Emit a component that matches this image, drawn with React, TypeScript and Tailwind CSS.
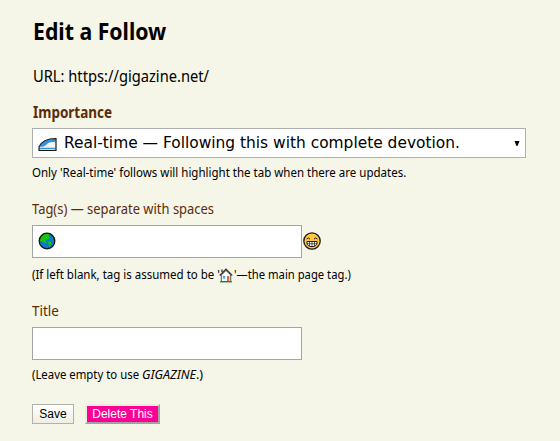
import React from "react";

function TrainIcon() {
  return (
    <svg viewBox="0 0 19 15" className="mt-[3px] h-[15px] w-[19px] shrink-0">
      <path d="M1 10C3 5 8 1.500 18 1.500V13.500H1Z" fill="#f3f7f3" />
      <path d="M1.500 9.500C4 4.500 9 2 17.500 2V5C12 4.500 10 5.500 8 8C6.500 9.800 4 10 1.500 9.500Z" fill="#2f91e0" />
      <path d="M1 11.500H17.500" stroke="#3b8ed0" strokeWidth="1.500" />
      <path d="M1 13.500V10C3 5 8 1.500 18 1.500V13.500Z" fill="none" stroke="#161616" strokeWidth="1.200" />
    </svg>
  );
}

function GlobeIcon() {
  return (
    <svg viewBox="0 0 18 18" className="-mt-[2px] size-[18px]">
      <circle cx="9" cy="9" r="7.800" fill="#0878d4" />
      <path d="M1.500 9C1.500 4 5 1.400 9.500 1.500L12 2.500L10.500 4L12 5L10.500 7L9 7L7.500 9.500L9 10.500L7 11L4 9.300Z M9.500 9.500L13 10L13.500 12L11.500 15.500L10.500 12Z M13.500 5L15 6L13.700 7Z" fill="#16c60c" />
      <circle cx="9" cy="9" r="7.800" fill="none" stroke="#111" strokeWidth="1.300" />
    </svg>
  );
}

function GrinIcon() {
  return (
    <svg viewBox="0 0 18 18" className="-mt-[2px] size-[18px]">
      <circle cx="9" cy="9" r="8.200" fill="#ffc83d" stroke="#1c1a18" strokeWidth="1.300" />
      <path d="M3.600 7.200Q5.300 4.500 7 7.200M11 7.200Q12.700 4.500 14.400 7.200" fill="none" stroke="#1c1a18" strokeWidth="1" />
      <path d="M4 9.500H14V11C14 13.300 12 14.600 9 14.600S4 13.300 4 11Z" fill="#fff" stroke="#1c1a18" strokeWidth="1" />
      <path d="M4 11.800H14M6.500 9.500V14M9 9.500V14.500M11.500 9.500V14" stroke="#1c1a18" strokeWidth=".7" />
    </svg>
  );
}

function HouseIcon() {
  return (
    <svg viewBox="0 0 14 15" className="h-[15px] w-[14px] shrink-0">
      <path d="M2.300 7L7 2.500L11.700 7V13.500H2.300Z" fill="#fff" stroke="#333" strokeWidth=".8" />
      <path d="M.8 7.500L7 1.300L13.200 7.500" fill="none" stroke="#3b3532" strokeWidth="1.400" />
      <path d="M3 1.500V4" stroke="#333" strokeWidth="1.300" />
      <rect x="3.800" y="8" width="2.400" height="2.600" fill="#45a7e6" />
      <rect x="8" y="8" width="2.300" height="5.300" fill="#d66b43" />
      <path d="M1 13.800H13" stroke="#277c35" strokeWidth="1.200" />
    </svg>
  );
}

export default function App() {
  return (
    <main className="flex h-[441px] w-[560px] flex-col items-start overflow-hidden bg-[#f5f5e8] pl-8 pt-[15px] font-['Noto_Sans',sans-serif] whitespace-nowrap text-black">
      <h1 className="h-[32px] pl-px text-[24px] leading-[32px] font-bold"><span className="inline-block origin-left scale-x-[0.885]">Edit a Follow</span></h1>
      <p className="mt-[17px] h-6 pl-px text-[15.500px] leading-6"><span className="inline-block origin-left scale-x-[0.947]">URL: https://gigazine.net/</span></p>
      <label className="mt-[12px] h-6 pl-px text-[15.500px] leading-6 font-bold text-[#5c2b09]"><span className="inline-block origin-left scale-x-[0.87]">Importance</span></label>
      <div className="mt-[4px] flex h-[30px] w-[494px] items-center border border-[#b0b0b0] bg-white pl-[5px] pr-[5px]">
        <TrainIcon />
        <span className="ml-[7px] flex-1 font-['DejaVu_Sans',sans-serif] text-[15.500px] leading-7"><span className="inline-block origin-left scale-x-[0.995]">Real-time — Following this with complete devotion.</span></span>
        <svg viewBox="0 0 6 5" className="h-[5px] w-[6px]"><path d="M.5 0H5.500L3.500 5H2.500Z" fill="#000" /></svg>
      </div>
      <p className="mt-[5px] h-5 text-[12.500px] leading-5"><span className="inline-block origin-left scale-x-[0.921]">Only 'Real-time' follows will highlight the tab when there are updates.</span></p>
      <label className="mt-[13px] h-6 text-[14.500px] leading-6 text-[#5c2b09]"><span className="inline-block origin-left scale-x-[0.892]">Tag(s) — separate with spaces</span></label>
      <div className="mt-[5px] flex items-center gap-[1px]">
        <div className="flex h-[33px] w-[270px] items-center border border-[#a5a5a5] bg-white pl-[5px]"><GlobeIcon /></div>
        <GrinIcon />
      </div>
      <p className="mt-[7px] flex h-5 items-center text-[12.500px] leading-5">
        <span className="w-[187px]"><span className="inline-block origin-left scale-x-[0.92]">(If left blank, tag is assumed to be '</span></span><HouseIcon /><span className="ml-px inline-block origin-left scale-x-[0.9]">'—the main page tag.)</span>
      </p>
      <label className="mt-[13px] h-6 text-[14.500px] leading-6 text-[#5c2b09]"><span className="inline-block origin-left scale-x-[0.93]">Title</span></label>
      <div className="mt-[5px] h-[33px] w-[270px] border border-[#a5a5a5] bg-white" />
      <p className="mt-[5px] flex h-5 text-[12.500px] leading-5"><span className="w-[110px]"><span className="inline-block origin-left scale-x-[0.91]">(Leave empty to use </span></span><span className="inline-block origin-left"><em>GIGAZINE</em>.)</span></p>
      <div className="mt-[19px] flex gap-[11px] font-['Liberation_Sans',sans-serif] text-[12px]">
        <button className="h-5 w-[42px] border border-[#b2b2a8] bg-linear-to-b from-white to-[#eeeee4] leading-[16px]">Save</button>
        <button className="h-5 w-[75px] border-2 border-t-[#ededdf] border-r-[#a2a2a2] border-b-[#a2a2a2] border-l-[#ededdf] bg-[#ff0096] leading-[15px] text-white">Delete This</button>
      </div>
    </main>
  );
}
